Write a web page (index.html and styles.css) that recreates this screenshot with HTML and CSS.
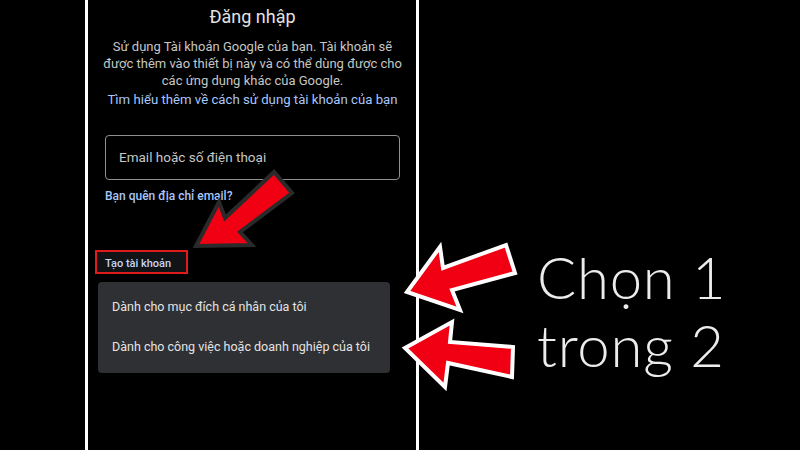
FILE: index.html
```html
<!DOCTYPE html>
<html>
<head>
    <title>Đăng nhập - Chọn 1 trong 2</title>
    <link rel="stylesheet" href="styles.css">
</head>
<body>
    <div class="stage">
        <!-- phone screen -->
        <div class="phone">
            <h1 class="title">Đăng nhập</h1>
            <p class="desc">Sử dụng Tài khoản Google của bạn. Tài khoản sẽ được thêm vào thiết bị này và có thể dùng được cho các ứng dụng khác của Google.</p>
            <a class="link learn">Tìm hiểu thêm về cách sử dụng tài khoản của bạn</a>

            <div class="field">Email hoặc số điện thoại</div>

            <a class="link forgot">Bạn quên địa chỉ email?</a>

            <div class="create">Tạo tài khoản</div>

            <div class="menu">
                <div class="menu-item">Dành cho mục đích cá nhân của tôi</div>
                <div class="menu-item">Dành cho công việc hoặc doanh nghiệp của tôi</div>
            </div>
        </div>

        <div class="caption">Chọn 1<br>trong 2</div>

        <!-- arrows drawn over the screenshot -->
        <svg class="arrows" width="800" height="450" viewBox="0 0 800 450">
            <polygon class="arrow dark" points="196,246 219,202 225,218 274,172 292,193 240,232 252,245"/>
            <polygon class="arrow light" points="407,292 440,247 443,268 506,245 515,273 452,290 460,310"/>
            <polygon class="arrow light" points="405,348 452,322 450,342 513,347 512,377 448,363 445,387"/>
        </svg>
    </div>
</body>
</html>
```

FILE: styles.css
```css
body {
    margin: 0;
    padding: 0;
    background-color: #000;
    font-family: Roboto, "Noto Sans", sans-serif;
}

.stage {
    position: relative;
    width: 800px;
    height: 450px;
    display: flex;
    overflow: hidden;
}

.phone {
    width: 295px;
    height: 450px;
    margin-left: 85px;
    padding: 0 16px 0 17px;
    border-left: 3px solid #fff;
    border-right: 3px solid #fff;
    display: flex;
    flex-direction: column;
    align-items: flex-start;
}

.title {
    align-self: stretch;
    margin: 6px 0 0 0;
    font-size: 18px;
    font-weight: 400;
    line-height: 22px;
    text-align: center;
    color: #e3e3e3;
}

.desc {
    align-self: stretch;
    margin: 10px -4px 0 -4px;
    font-size: 13px;
    line-height: 17px;
    text-align: center;
    color: #c4c7c5;
}

.link {
    color: #a8c7fa;
    font-weight: 500;
}

.learn {
    align-self: stretch;
    margin: 2px -6px 0 -6px;
    font-size: 13.2px;
    font-weight: 400;
    line-height: 17px;
    text-align: center;
    white-space: nowrap;
}

.field {
    box-sizing: border-box;
    align-self: stretch;
    height: 45px;
    margin-top: 27px;
    padding-left: 13px;
    border: 1px solid #8e918f;
    border-radius: 4px;
    font-size: 13.5px;
    line-height: 43px;
    color: #c4c7c5;
}

.forgot {
    margin-top: 8px;
    font-size: 12px;
    line-height: 16px;
}

.create {
    box-sizing: border-box;
    height: 24px;
    margin: 46px 0 0 -10px;
    padding: 4px 15px 0 8px;
    border: 2px solid #e01b1b;
    background-color: #121316;
    font-size: 11px;
    line-height: 16px;
    font-weight: 500;
    color: #c2d6f5;
}

.menu {
    box-sizing: border-box;
    width: 292px;
    margin: 8px 0 0 -7px;
    padding: 5px 0 6px 0;
    background-color: #2f3033;
    border-radius: 4px;
}

.menu-item {
    height: 40px;
    padding-left: 14px;
    font-size: 12.5px;
    line-height: 40px;
    color: #e3e3e3;
}

.caption {
    margin: 243px 0 0 118px;
    font-family: Lato, sans-serif;
    font-weight: 300;
    font-size: 58px;
    line-height: 68px;
    letter-spacing: 0.8px;
    color: #ececec;
    white-space: nowrap;
}

.arrows {
    position: absolute;
    left: 0;
    top: 0;
}

.arrow {
    fill: #f00012;
    stroke-width: 4;
    stroke-linejoin: miter;
}

.arrow.dark {
    stroke: #2a2a2a;
}

.arrow.light {
    stroke: #fff;
}
```
